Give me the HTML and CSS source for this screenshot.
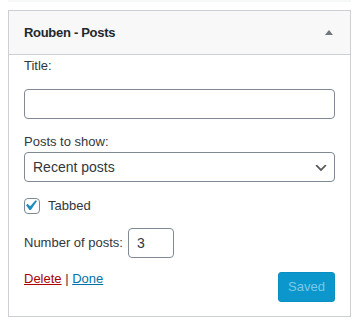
FILE: index.html
```html
<!DOCTYPE html>
<html>
<head>
<meta charset="utf-8">
<link rel="stylesheet" href="styles.css">
</head>
<body>
<div class="prev-strip"></div>
<div class="widget">
  <div class="widget-top">
    <h3 class="widget-title">Rouben - Posts</h3>
    <span class="toggle"></span>
  </div>
  <div class="widget-inside">
    <label class="lbl lbl-title">Title:</label>
    <div class="field field-title"></div>

    <label class="lbl lbl-posts">Posts to show:</label>
    <div class="select">
      <span class="select-text">Recent posts</span>
      <svg class="chev" width="16" height="16" viewBox="0 0 20 20"><path d="M5 6l5 5 5-5 2 1-7 7-7-7 2-1z" fill="#555"/></svg>
    </div>

    <div class="check-row">
      <span class="checkbox">
        <svg width="16" height="16" viewBox="3.81 2.86 15.24 15.24"><path d="M14.83 4.89l1.34.94-5.81 8.38H9.02L5.78 9.67l1.34-1.25 2.57 2.4z" fill="#1e8cbe"/></svg>
      </span>
      <span class="check-label">Tabbed</span>
    </div>

    <div class="num-row">
      <span class="num-label">Number of posts:</span>
      <span class="field field-num">3</span>
    </div>

    <div class="actions">
      <div class="links"><a class="del">Delete</a> | <a class="done">Done</a></div>
      <span class="btn-saved">Saved</span>
    </div>
  </div>
</div>
</body>
</html>
```
FILE: styles.css
```css
html, body {
  margin: 0;
  padding: 0;
  background: #fff;
}
body {
  font-family: "Liberation Sans", Arial, sans-serif;
  font-size: 13px;
  line-height: 18px;
  color: #32373c;
}
.prev-strip {
  margin-left: 8px;
  width: 343px;
  height: 2px;
  background: #f6f7f7;
}
.widget {
  margin: 8px 0 0 8px;
  width: 343px;
  box-sizing: border-box;
  border: 1px solid #ccd0d4;
  background: #fff;
}
.widget-top {
  height: 43px;
  background: #f8f8f8;
  border-bottom: 1px solid #ccd0d4;
  display: flex;
  align-items: center;
  justify-content: space-between;
  padding: 0 17px 0 15px;
}
.widget-title {
  margin: 0;
  font-size: 13px;
  font-weight: bold;
  color: #23282d;
  letter-spacing: -0.3px;
}
.toggle {
  width: 0;
  height: 0;
  border-left: 4px solid transparent;
  border-right: 4px solid transparent;
  border-bottom: 5px solid #72777c;
  margin-top: -1px;
}
.widget-inside {
  padding: 2px 15px 14px 15px;
  display: flex;
  flex-direction: column;
}
.lbl {
  display: block;
  height: 18px;
}
.field {
  box-sizing: border-box;
  height: 30px;
  border: 1px solid #7e8993;
  border-radius: 4px;
  background: #fff;
  font-size: 14px;
  color: #32373c;
}
.field-title {
  margin-top: 14px;
  width: 100%;
}
.lbl-posts {
  margin-top: 14px;
}
.select {
  margin-top: 1px;
  box-sizing: border-box;
  height: 30px;
  border: 1px solid #7e8993;
  border-radius: 4px;
  background: #fff;
  display: flex;
  align-items: center;
  justify-content: space-between;
  padding: 0 5px 0 8px;
  font-size: 14px;
  color: #32373c;
}
.chev {
  margin-top: 2px;
}
.check-row {
  margin-top: 16px;
  height: 16px;
  display: flex;
  align-items: center;
  gap: 8px;
}
.checkbox {
  box-sizing: border-box;
  width: 16px;
  height: 16px;
  border: 1px solid #7e8993;
  border-radius: 4px;
  background: #fff;
  display: flex;
  align-items: center;
  justify-content: center;
  overflow: visible;
}
.checkbox svg {
  flex: none;
  width: 16px;
  height: 16px;
  margin: -1px 0 0 -1px;
}
.num-row {
  margin-top: 14px;
  display: flex;
  align-items: center;
  gap: 5px;
}
.field-num {
  width: 46px;
  display: flex;
  align-items: center;
  padding-left: 8px;
}
.actions {
  margin-top: 12px;
  display: flex;
  justify-content: space-between;
  align-items: flex-start;
}
.links {
  line-height: 18px;
}
.del {
  color: #a00;
  text-decoration: underline;
}
.done {
  color: #0073aa;
  text-decoration: underline;
}
.btn-saved {
  margin-top: 2px;
  box-sizing: border-box;
  width: 57px;
  height: 30px;
  border: 1px solid #0a8fc4;
  border-radius: 3px;
  background: #0b97cc;
  color: #7cc8e8;
  font-size: 13px;
  display: flex;
  align-items: center;
  justify-content: center;
}
```
